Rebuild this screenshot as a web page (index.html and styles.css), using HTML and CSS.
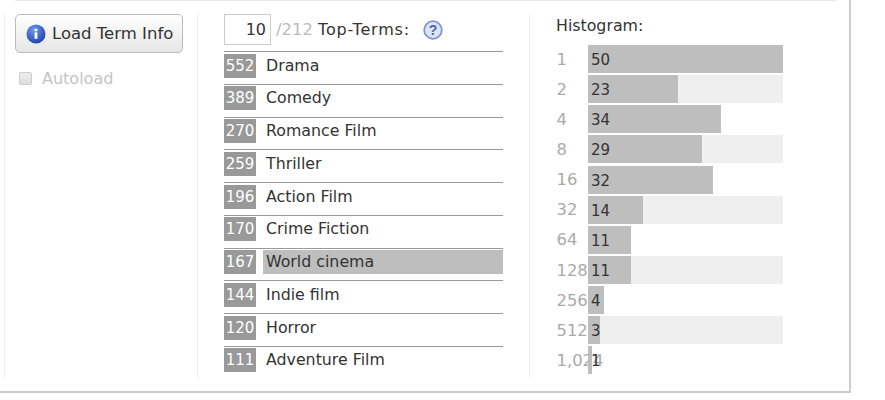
FILE: index.html
```html
<!DOCTYPE html>
<html lang="en">
<head>
    <meta charset="UTF-8">
    <title>Term Info</title>
    <link rel="stylesheet" href="styles.css">
</head>
<body>
    <div class="panel">
        <div class="columns">
            <!-- Load column -->
            <div class="col col-load">
                <button class="load-btn">
                    <svg class="info-icon" width="20" height="20" viewBox="0 0 20 20">
                        <defs>
                            <radialGradient id="infoFill" cx="40%" cy="30%" r="75%">
                                <stop offset="0" stop-color="#6f9be8"/>
                                <stop offset="1" stop-color="#1c3fb0"/>
                            </radialGradient>
                        </defs>
                        <circle cx="10" cy="10" r="9.5" fill="url(#infoFill)"/>
                        <rect x="8.6" y="8.4" width="2.8" height="6.4" fill="#fff"/>
                        <rect x="8.6" y="4.8" width="2.8" height="2.4" fill="#fff"/>
                    </svg>
                    Load Term Info
                </button>
                <label class="autoload"><span class="fake-check"></span>Autoload</label>
            </div>

            <!-- Top terms column -->
            <div class="col col-terms">
                <div class="terms-head">
                    <span class="count-box">10</span>
                    <span class="total">/212</span>
                    <span class="terms-title">Top-Terms:</span>
                    <svg class="help-icon" width="20" height="20" viewBox="0 0 20 20">
                        <circle cx="10" cy="10" r="8.8" fill="#dfe5f8" stroke="#8094da" stroke-width="1.8"/>
                        <text x="10" y="15" text-anchor="middle" class="help-mark">?</text>
                    </svg>
                </div>
                <div class="term"><span class="num">552</span><span class="name">Drama</span></div>
                <div class="term"><span class="num">389</span><span class="name">Comedy</span></div>
                <div class="term"><span class="num">270</span><span class="name">Romance Film</span></div>
                <div class="term"><span class="num">259</span><span class="name">Thriller</span></div>
                <div class="term"><span class="num">196</span><span class="name">Action Film</span></div>
                <div class="term"><span class="num">170</span><span class="name">Crime Fiction</span></div>
                <div class="term selected"><span class="num">167</span><span class="name">World cinema</span></div>
                <div class="term"><span class="num">144</span><span class="name">Indie film</span></div>
                <div class="term"><span class="num">120</span><span class="name">Horror</span></div>
                <div class="term"><span class="num">111</span><span class="name">Adventure Film</span></div>
            </div>

            <!-- Histogram column -->
            <div class="col col-hist">
                <div class="hist-title">Histogram:</div>
                <div class="hist-row"><span class="label">1</span><div class="track"><div class="bar" style="width:195px"></div><span class="val">50</span></div></div>
                <div class="hist-row"><span class="label">2</span><div class="track"><div class="bar" style="width:90px"></div><span class="val">23</span></div></div>
                <div class="hist-row"><span class="label">4</span><div class="track"><div class="bar" style="width:133px"></div><span class="val">34</span></div></div>
                <div class="hist-row"><span class="label">8</span><div class="track"><div class="bar" style="width:114px"></div><span class="val">29</span></div></div>
                <div class="hist-row"><span class="label">16</span><div class="track"><div class="bar" style="width:125px"></div><span class="val">32</span></div></div>
                <div class="hist-row"><span class="label">32</span><div class="track"><div class="bar" style="width:55px"></div><span class="val">14</span></div></div>
                <div class="hist-row"><span class="label">64</span><div class="track"><div class="bar" style="width:43px"></div><span class="val">11</span></div></div>
                <div class="hist-row"><span class="label">128</span><div class="track"><div class="bar" style="width:43px"></div><span class="val">11</span></div></div>
                <div class="hist-row"><span class="label">256</span><div class="track"><div class="bar" style="width:16px"></div><span class="val">4</span></div></div>
                <div class="hist-row"><span class="label">512</span><div class="track"><div class="bar" style="width:12px"></div><span class="val">3</span></div></div>
                <div class="hist-row"><span class="label">1,024</span><div class="track"><div class="bar" style="width:4px"></div><span class="val">1</span></div></div>
            </div>
        </div>
    </div>
</body>
</html>
```

FILE: styles.css
```css
* {
    margin: 0;
    padding: 0;
    box-sizing: border-box;
}

body {
    background: #fff;
    color: #333;
    font-family: "DejaVu Sans", sans-serif;
    font-size: 15.8px;
    overflow: hidden;
}

.panel {
    width: 851px;
    height: 393px;
    padding: 14px 0 0 4px;
    border-right: 2px solid #ccc;
    border-bottom: 2px solid #ccc;
    position: relative;
}

/* thin line along the top of the panel */
.panel::before {
    content: "";
    position: absolute;
    left: 15px;
    top: 0;
    width: 821px;
    height: 1px;
    background: #e8e8e8;
}

.columns {
    display: flex;
    height: 364px;
}

.col {
    border-left: 1px solid #eee;
}

/* Load column */
.col-load {
    width: 193px;
    padding-left: 10px;
}

.load-btn {
    display: flex;
    align-items: center;
    gap: 6px;
    width: 168px;
    height: 39px;
    padding-left: 10px;
    border: 1px solid #bbb;
    border-radius: 5px;
    background: linear-gradient(#fff, #e6e6e6);
    color: #333;
    font: inherit;
    font-size: 16.5px;
    white-space: nowrap;
}

.autoload {
    display: flex;
    align-items: center;
    gap: 10px;
    margin: 16px 0 0 4px;
    color: #c4c4c4;
    font-size: 16px;
}

.fake-check {
    width: 13px;
    height: 13px;
    border: 1px solid #ccc;
    border-radius: 2px;
    background: linear-gradient(#eee, #ddd);
}

/* Top terms column */
.col-terms {
    width: 332px;
    padding-left: 26px;
}

.terms-head {
    display: flex;
    align-items: center;
    height: 31px;
    margin-bottom: 6px;
    white-space: nowrap;
}

.count-box {
    width: 47px;
    height: 31px;
    margin-right: 5px;
    padding: 5px 4px 0 0;
    border: 1px solid #ccc;
    font-size: 16px;
    text-align: right;
}

.total {
    margin-right: 5px;
    color: #bbb;
    font-size: 16.5px;
}

.terms-title {
    font-size: 16px;
    letter-spacing: 0.8px;
}

.help-icon {
    margin-left: 13px;
}

.help-mark {
    fill: #4a5fc0;
    font-family: "Liberation Sans", sans-serif;
    font-size: 14px;
    font-weight: bold;
}

.term {
    display: flex;
    width: 279px;
    height: 32.78px;
    padding-top: 1.5px;
    border-top: 1.5px solid #999;
}

.num {
    width: 32px;
    height: 24px;
    background: #999;
    color: #fff;
    font-size: 15px;
    line-height: 24px;
    text-align: center;
}

.name {
    flex: 1;
    height: 24px;
    margin-left: 7px;
    padding-left: 3px;
    line-height: 24.6px;
}

.selected .name {
    background: #bebebe;
}

/* Histogram column */
.col-hist {
    padding-left: 27px;
}

.hist-title {
    height: 30px;
    margin-left: -1px;
    padding-top: 2px;
}

.hist-row {
    display: flex;
    align-items: center;
    height: 30.15px;
    white-space: nowrap;
}

.label {
    width: 31px;
    margin-left: -0.5px;
    margin-right: 0.5px;
    color: #aaa;
    font-size: 16.4px;
}

.track {
    position: relative;
    width: 195px;
    height: 28px;
    font-size: 15px;
    line-height: 30px;
}

.hist-row:nth-child(odd) .track {
    background: #efefef;
}

.bar {
    height: 100%;
    background: #bebebe;
}

.val {
    position: absolute;
    left: 3px;
    top: 0;
}
```
